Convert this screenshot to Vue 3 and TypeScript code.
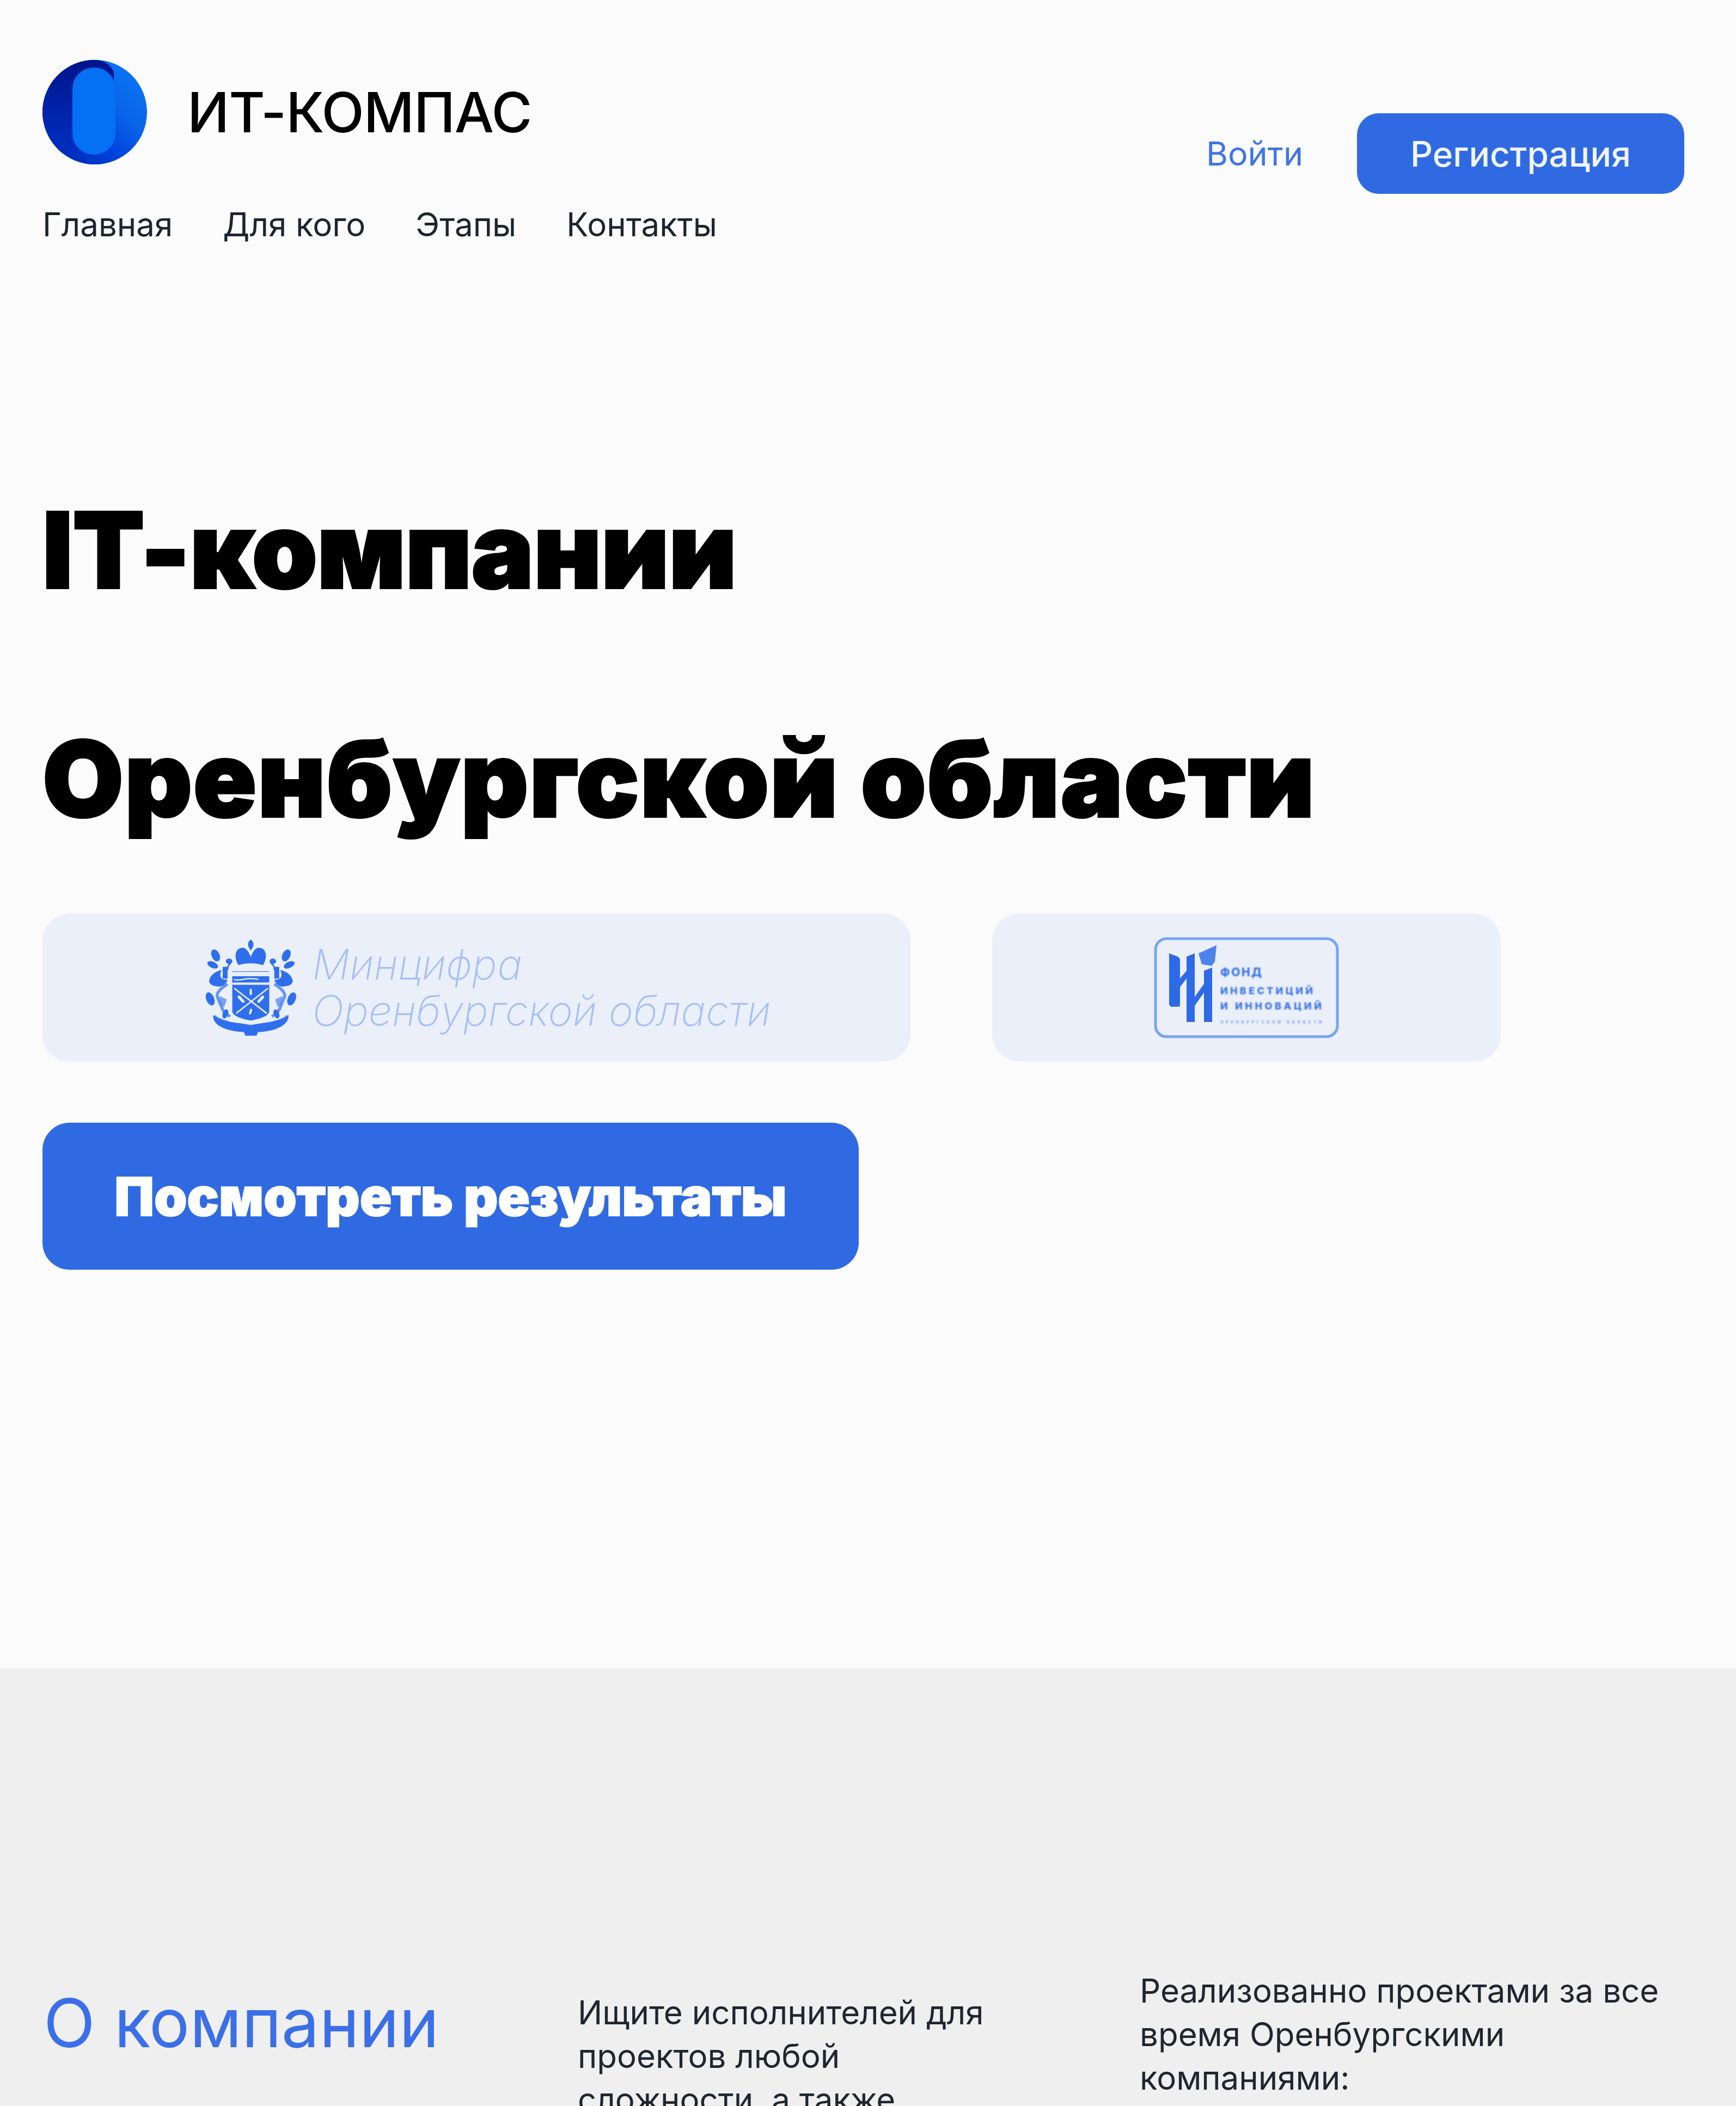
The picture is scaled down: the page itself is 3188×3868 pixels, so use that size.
<template>
  <div class="page">
    <section class="hero">
      <header class="top">
        <div class="top-left">
          <div class="brand">
            <svg class="brand-mark" viewBox="0 0 194 196">
              <defs>
                <linearGradient id="discFill" x1="0.25" y1="1" x2="0.95" y2="0.3">
                  <stop offset="0" stop-color="#0028b8" />
                  <stop offset="0.4" stop-color="#0044dc" />
                  <stop offset="0.75" stop-color="#0a66ea" />
                  <stop offset="1" stop-color="#0a70f2" />
                </linearGradient>
                <linearGradient id="discShade" x1="0" y1="0" x2="0" y2="1">
                  <stop offset="0" stop-color="#00148c" />
                  <stop offset="1" stop-color="#0030c4" />
                </linearGradient>
              </defs>
              <circle cx="97" cy="98" r="96" fill="url(#discFill)" />
              <path d="M97 2 C112 2 124 8 132 24 L132 90 L58 180 C26 165 1 135 1 98 C1 45 44 2 97 2Z" fill="url(#discShade)" />
              <rect x="56" y="16" width="79" height="160" rx="39" fill="#0570f4" />
            </svg>
            <span class="brand-name">ИТ-КОМПАС</span>
          </div>
          <nav class="nav">
            <a v-for="item in navItems" :key="item">{{ item }}</a>
          </nav>
        </div>
        <div class="actions">
          <a class="login">Войти</a>
          <button class="register">Регистрация</button>
        </div>
      </header>

      <h1 class="title">
        <span class="title-first">IT-компании</span>
        <span>Оренбургской области</span>
      </h1>

      <div class="partners">
        <div class="partner partner-wide">
          <svg class="arms" viewBox="100 90 520 540">
            <defs>
              <g id="wing">
                <ellipse cx="166" cy="182" rx="22" ry="35" transform="rotate(-25 166 182)" />
                <ellipse cx="150" cy="234" rx="17" ry="32" transform="rotate(-65 150 234)" />
                <ellipse cx="240" cy="214" rx="18" ry="15" />
                <path d="M205 245 H232 V310 H205Z" />
                <path d="M130 325 C135 285 170 270 200 262 C185 290 190 320 232 315 C225 345 195 360 170 352 C150 350 135 345 130 325Z" />
                <path d="M250 225 C235 235 232 245 232 262" fill="none" stroke="#2f6fee" stroke-width="8" />
                <ellipse cx="136" cy="422" rx="22" ry="38" transform="rotate(-22 136 422)" />
                <path d="M232 340 C195 365 170 385 175 410 L200 470 C205 490 225 505 245 520" fill="none" stroke="#2f6fee" stroke-width="16" opacity="0.7" />
                <path d="M185 405 L228 425 L212 470 L195 450Z" opacity="0.6" />
                <ellipse cx="220" cy="505" rx="15" ry="26" transform="rotate(20 220 505)" />
                <path d="M160 515 C175 530 205 545 235 550" fill="none" stroke="#2f6fee" stroke-width="12" opacity="0.7" />
              </g>
            </defs>
            <g fill="#2f6fee">
              <path d="M360 95 C378 108 382 128 360 155 C338 128 342 108 360 95Z" />
              <path d="M292 236 C264 190 274 140 316 140 C336 140 350 165 360 190 C370 165 384 140 404 140 C446 140 456 190 428 236 C385 222 335 222 292 236Z" />
              <path d="M258 270 H462 V490 Q462 522 360 542 Q258 522 258 490Z" />
              <use href="#wing" />
              <use href="#wing" transform="translate(722 0) scale(-1 1)" />
              <path d="M153 510 C175 535 240 550 300 556 L360 566 L420 556 C480 550 545 535 568 510 C575 560 510 600 400 605 L392 625 H330 L322 605 C210 600 145 560 153 510Z" />
            </g>
            <g fill="none" stroke="#e9eefb" stroke-linecap="round">
              <path d="M264 285 H458" stroke-width="24" />
              <path d="M264 338 H458" stroke-width="13" />
              <path d="M270 316 C310 325 330 300 400 314" stroke-width="7" />
              <path d="M272 366 L446 500" stroke-width="8" />
              <path d="M452 366 L282 500" stroke-width="8" />
              <path d="M296 412 L318 436" stroke-width="16" />
              <path d="M426 412 L404 436" stroke-width="16" />
              <path d="M360 372 V395" stroke-width="12" />
              <path d="M362 482 L356 502" stroke-width="12" />
            </g>
          </svg>
          <div class="partner-name">
            <span>Минцифра</span>
            <span>Оренбургской области</span>
          </div>
        </div>
        <div class="partner partner-narrow">
          <svg class="fund" viewBox="0 0 340 186">
            <rect x="3" y="3" width="334" height="180" rx="20" fill="none" stroke="#76a5f2" stroke-width="5" />
            <g fill="#2e6ae6">
              <path d="M28 30 L44 36 C47 38 48 40 48 44 V124 L47 128 H31 L28 124Z" />
              <path d="M60 36 L75 30 V156 H60Z" />
              <path d="M92 62 L107 56 V156 H92Z" />
              <path d="M48 76 L60 62 V76 L48 92Z" />
              <path d="M75 110 L92 86 V102 L75 126Z" />
            </g>
            <path d="M82 30 L115 15 L112 45 L106 53 L88 50Z" fill="#4d83ec" />
            <g class="fund-text" fill="#3a74e8" font-weight="800">
              <text x="122" y="72" font-size="21" textLength="76">ФОНД</text>
              <text x="122" y="105" font-size="18" textLength="170">ИНВЕСТИЦИЙ</text>
              <text x="122" y="133" font-size="18" textLength="186">И ИННОВАЦИЙ</text>
              <text x="122" y="159" font-size="7" textLength="186" fill="#7ea4ee">ОРЕНБУРГСКОЙ ОБЛАСТИ</text>
            </g>
          </svg>
        </div>
      </div>

      <button class="cta">Посмотреть результаты</button>
    </section>

    <section class="about">
      <h2 class="about-title">О компании</h2>
      <p class="about-text about-lead">Ищите исполнителей для проектов любой сложности, а также</p>
      <p class="about-text about-done">Реализованно проектами за все время Оренбургскими компаниями:</p>
    </section>
  </div>
</template>

<script setup lang="ts">
const navItems: string[] = ['Главная', 'Для кого', 'Этапы', 'Контакты']
</script>

<style>
html,
body {
  margin: 0;
  background: #fbfbfc;
}
</style>

<style scoped>
.page {
  height: 3868px;
  overflow: hidden;
  font-family: Inter, "Liberation Sans", sans-serif;
  background: #fbfbfc;
}

.hero {
  box-sizing: border-box;
  height: 3065px;
  padding: 108px 95px 0 78px;
}

.top {
  display: flex;
  justify-content: space-between;
  align-items: flex-start;
}

.brand {
  display: flex;
  align-items: center;
  gap: 73px;
}

.brand-mark {
  width: 194px;
  height: 196px;
  flex: none;
  margin-left: -1px;
}

.brand-name {
  font-size: 102px;
  font-weight: 500;
  letter-spacing: -1px;
  color: #000;
}

.nav {
  display: flex;
  gap: 92px;
  margin-top: 72px;
  font-size: 60px;
  line-height: 72px;
  color: #1c2430;
}

.actions {
  display: flex;
  align-items: center;
  gap: 99px;
  margin-top: 100px;
}

.login {
  font-size: 61px;
  color: #3f74ea;
}

.register {
  width: 601px;
  height: 148px;
  border: none;
  border-radius: 40px;
  background: #2f6ae2;
  color: #f2f5fd;
  font: 500 64px Inter, "Liberation Sans", sans-serif;
}

.title {
  display: flex;
  flex-direction: column;
  margin: 352px 0 0;
  font-size: 192px;
  font-weight: 900;
  line-height: 420px;
  letter-spacing: 2px;
  -webkit-text-stroke: 4px #000;
  color: #000;
}

.title-first {
  letter-spacing: -0.5px;
}

.partners {
  display: flex;
  gap: 150px;
  margin-top: 38px;
}

.partner {
  display: flex;
  align-items: center;
  justify-content: center;
  box-sizing: border-box;
  height: 272px;
  border-radius: 50px;
  background: #ebeffa;
}

.partner-wide {
  width: 1594px;
  gap: 26px;
  padding-left: 40px;
}

.partner-narrow {
  width: 934px;
}

.arms {
  width: 173px;
  height: 180px;
  flex: none;
}

.partner-name {
  display: flex;
  flex-direction: column;
  font-size: 77px;
  line-height: 85px;
  font-weight: 200;
  font-style: italic;
  color: #a3c0f6;
}

.fund {
  width: 340px;
  height: 186px;
}

.fund-text {
  font-family: Inter, "Liberation Sans", sans-serif;
  filter: blur(1px);
}

.cta {
  display: block;
  width: 1499px;
  height: 270px;
  margin-top: 112px;
  border: none;
  border-radius: 50px;
  background: #2f6ae2;
  color: #fff;
  font: 900 97px Inter, "Liberation Sans", sans-serif;
  -webkit-text-stroke: 2px #fff;
}

.about {
  display: grid;
  grid-template-columns: 981px 1032px 1fr;
  align-items: start;
  height: 803px;
  padding-left: 80px;
  background: #efeff0;
}

.about-title {
  margin: 570px 0 0;
  font-size: 124px;
  line-height: 160px;
  font-weight: 400;
  color: #3b6fe8;
}

.about-text {
  margin: 0;
  font-size: 60px;
  line-height: 80px;
  color: #20262e;
}

.about-lead {
  width: 800px;
  margin-top: 591px;
}

.about-done {
  width: 1000px;
  margin-top: 551px;
}
</style>
